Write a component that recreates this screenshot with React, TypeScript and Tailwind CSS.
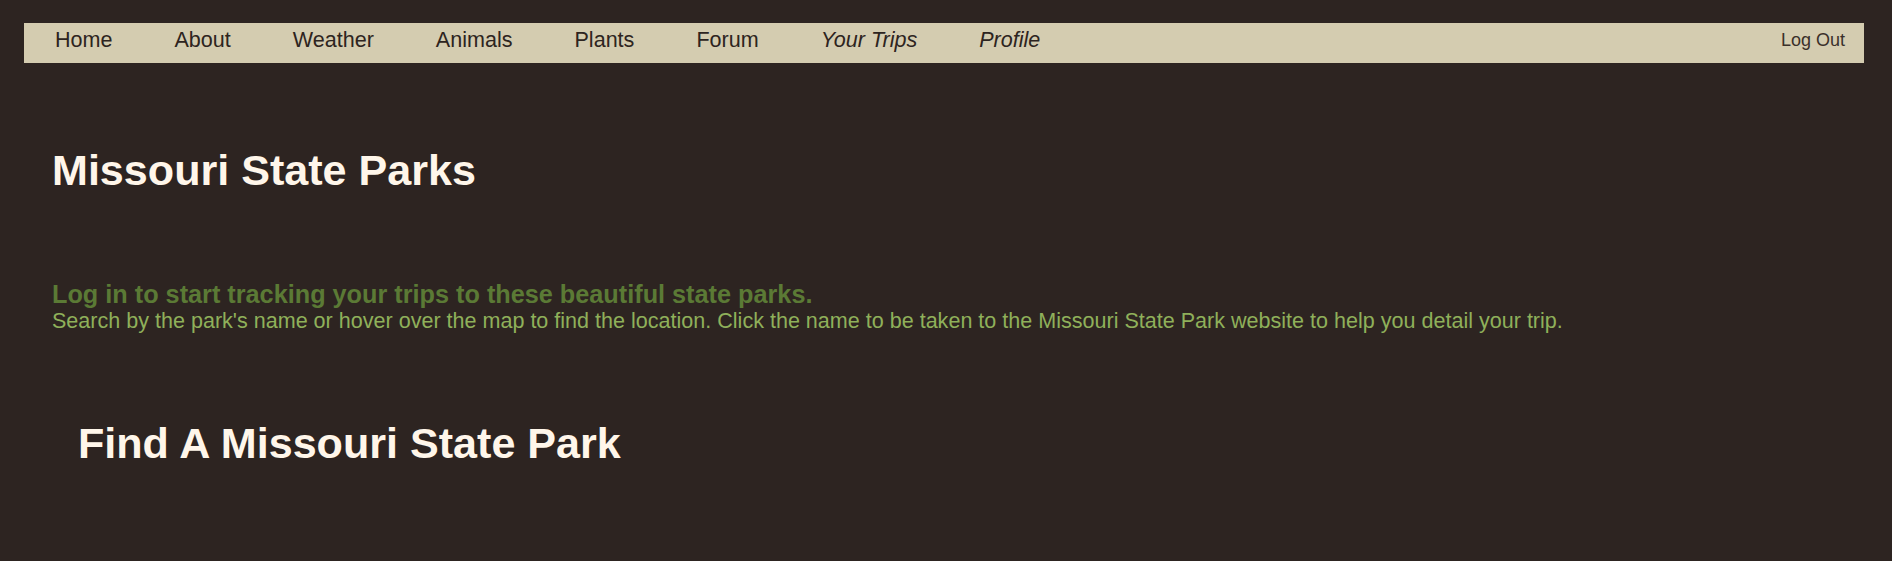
import React from "react";

const links = [
    { label: "Home", italic: false },
    { label: "About", italic: false },
    { label: "Weather", italic: false },
    { label: "Animals", italic: false },
    { label: "Plants", italic: false },
    { label: "Forum", italic: false },
    { label: "Your Trips", italic: true },
    { label: "Profile", italic: true },
];

const App: React.FC = () => {
    return (
        <div className="min-h-screen bg-[#2d2421] pt-[23px] font-['Liberation_Sans',Arial,sans-serif]">
            {/* Nav */}
            <nav className="ml-[24px] flex h-[40px] w-[1840px] items-center justify-between bg-[#d4ccb0] pr-[19px] pb-[5px]">
                <ul className="flex">
                    {links.map((l) => (
                        <li key={l.label}>
                            <a
                                href="#"
                                className={
                                    l.italic
                                        ? "block px-[31px] text-[21.55px] leading-[1.15] text-[#2d2420] italic"
                                        : "block px-[31px] text-[21.55px] leading-[1.15] text-[#2d2420]"
                                }
                            >
                                {l.label}
                            </a>
                        </li>
                    ))}
                </ul>
                <a href="#" className="text-[18px] leading-[1.15] text-[#3a302a]">
                    Log Out
                </a>
            </nav>

            <main className="pl-[52px]">
                <h1 className="mt-[83px] text-[43.1px] font-bold leading-[49px] text-[#fff6ea]">
                    Missouri State Parks
                </h1>

                {/* Intro */}
                <div className="mt-[85px]">
                    <p className="text-[25.25px] font-bold leading-[29px] text-[#5b7a35]">
                        Log in to start tracking your trips to these beautiful state parks.
                    </p>
                    <p className="text-[21.55px] leading-[24.5px] text-[#8fb05a]">
                        Search by the park's name or hover over the map to find the location. Click the name to be taken to the Missouri State Park website to help you detail your trip.
                    </p>
                </div>

                {/* Search */}
                <section className="mt-[85px] pl-[26px]">
                    <h2 className="text-[43.1px] font-bold leading-[49px] text-[#fff6ea]">
                        Find A Missouri State Park
                    </h2>
                </section>
            </main>
        </div>
    );
};

export default App;
